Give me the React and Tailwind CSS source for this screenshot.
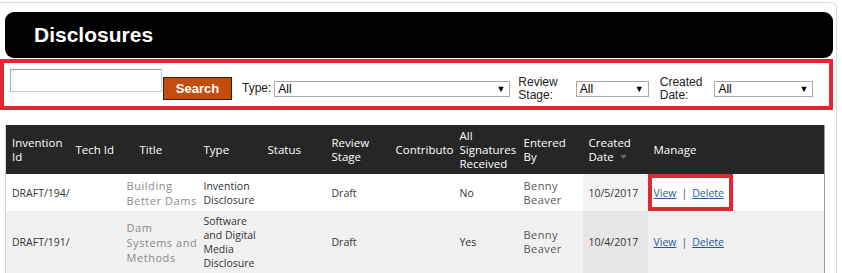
import React from 'react';

const rows = [
  {
    id: 'DRAFT/194/',
    title: ['Building', 'Better Dams'],
    type: ['Invention', 'Disclosure'],
    stage: 'Draft',
    signed: 'No',
    by: ['Benny', 'Beaver'],
    date: '10/5/2017',
    highlight: true,
  },
  {
    id: 'DRAFT/191/',
    title: ['Dam', 'Systems and', 'Methods'],
    type: ['Software', 'and Digital', 'Media', 'Disclosure'],
    stage: 'Draft',
    signed: 'Yes',
    by: ['Benny', 'Beaver'],
    date: '10/4/2017',
    highlight: false,
  },
];

function FakeSelect({ width }) {
  return (
    <div className={`mt-[18px] flex h-[16px] items-center justify-between border border-[#a9a9a9] bg-white pl-[3px] pr-[4px] text-[12px] leading-none text-black ${width}`}>
      <span>All</span>
      <span className="text-[9px]">▼</span>
    </div>
  );
}

function Lines({ items }) {
  return items.map((t, i) => (
    <div key={i} className="whitespace-nowrap">
      {t}
    </div>
  ));
}

export default function App() {
  return (
    <div className="h-[273px] w-[842px] overflow-hidden bg-white">
      <div className="mt-[2px] h-[271px] w-[837px] rounded-tr-[6px] border-t border-r border-[#dcdcdc]">
        {/* title bar */}
        <div className="ml-[5px] mt-[9px] flex h-[46px] w-[828px] items-center rounded-[9px] bg-black pl-[29px]">
          <h1 className="font-['Liberation_Sans',Arial,sans-serif] text-[21px] font-bold text-white">Disclosures</h1>
        </div>

        {/* filters */}
        <div className="mt-[1px] flex h-[51px] w-[833px] items-start border-[4px] border-[#dd2a32] font-['Liberation_Sans',Arial,sans-serif] text-[12px] text-[#222]">
          <input
            type="text"
            className="ml-[6px] mt-[6px] h-[23px] w-[152px] border border-[#c8c8c8] border-t-[#9a9a9a] border-l-[#b0b0b0] bg-white outline-none"
          />
          <button className="ml-[1px] mt-[14px] h-[23px] w-[69px] border border-[#3b1d06] bg-[#c24d0c] text-[13px] font-bold text-white">
            Search
          </button>
          <span className="ml-[10px] mt-[19px] leading-none">Type:</span>
          <span className="ml-[3px]"><FakeSelect width="w-[236px]" /></span>
          <span className="ml-[8px] mt-[13px] leading-[13px]">
            Review<br />Stage:
          </span>
          <span className="ml-[18px]"><FakeSelect width="w-[73px]" /></span>
          <span className="ml-[11px] mt-[13px] leading-[13px]">
            Created<br />Date:
          </span>
          <span className="ml-[12px]"><FakeSelect width="w-[99px]" /></span>
        </div>

        {/* table */}
        <table className="ml-[5px] mt-[15px] w-[820px] table-fixed border-collapse border-l border-r border-l-[#d4d4d4] border-r-[#9d9d9d] font-['Open_Sans','Noto_Sans',sans-serif] text-[#333]">
          <colgroup>
            <col className="w-[64px]" />
            <col className="w-[50px]" />
            <col className="w-[78px]" />
            <col className="w-[64px]" />
            <col className="w-[64px]" />
            <col className="w-[64px]" />
            <col className="w-[64px]" />
            <col className="w-[64px]" />
            <col className="w-[65px]" />
            <col className="w-[65px]" />
            <col />
          </colgroup>
          <thead>
            <tr className="h-[49px] bg-[#262626] text-left align-middle text-[11.5px] leading-[14px] text-white">
              <th className="overflow-hidden pl-[6px] font-normal leading-[14px]">Invention<br />Id</th>
              <th className="overflow-hidden pl-[6px] font-normal whitespace-nowrap">Tech Id</th>
              <th className="overflow-hidden pl-[20px] font-normal">Title</th>
              <th className="overflow-hidden pl-[6px] font-normal">Type</th>
              <th className="overflow-hidden pl-[6px] font-normal">Status</th>
              <th className="overflow-hidden pl-[6px] font-normal leading-[14px]">Review<br />Stage</th>
              <th className="overflow-hidden pl-[6px] font-normal">Contributors</th>
              <th className="overflow-hidden pl-[6px] font-normal leading-[14px] whitespace-nowrap">All<br />Signatures<br />Received</th>
              <th className="overflow-hidden pl-[6px] font-normal leading-[14px]">Entered<br />By</th>
              <th className="overflow-hidden pl-[6px] font-normal leading-[14px]">
                Created<br />
                Date
                <svg className="ml-[6px] inline-block align-middle" width="7" height="4" viewBox="0 0 7 4">
                  <path d="M0 0h7L3.5 4z" fill="#666" />
                </svg>
              </th>
              <th className="overflow-hidden pl-[6px] font-normal">Manage</th>
            </tr>
          </thead>
          <tbody className="text-[10.5px] leading-[14px]">
            {rows.map((r, i) => (
              <tr key={r.id} className={`align-middle ${i % 2 ? 'bg-[#f1f1f1]' : 'bg-white'}`}>
                <td className="py-[3px] pl-[6px]">{r.id}</td>
                <td className="pl-[6px]"></td>
                <td className="py-[3px] pl-[7px] text-[11px] leading-[15px] tracking-[0.05em] text-[#8a8a8a]">
                  <Lines items={r.title} />
                </td>
                <td className="py-[3px] pl-[6px]"><Lines items={r.type} /></td>
                <td className="pl-[6px]"></td>
                <td className="pl-[6px]">{r.stage}</td>
                <td className="pl-[6px]"></td>
                <td className="pl-[6px]">{r.signed}</td>
                <td className="py-[3px] pl-[6px] text-[11px] tracking-[0.04em] text-[#555]">
                  <Lines items={r.by} />
                </td>
                <td className={`pl-[6px] ${i % 2 ? 'bg-[#e7e7e7]' : 'bg-[#f3f3f3]'}`}>{r.date}</td>
                <td className="p-0">
                  {r.highlight ? (
                    <div className="flex h-[37px] w-[85px] items-center border-[4px] border-[#dd2a32] pl-[2px]">
                      <a href="#" className="text-[#1f5ba8] underline">View</a>
                      <span className="mx-[5px] text-[#555]">|</span>
                      <a href="#" className="text-[#1f5ba8] underline">Delete</a>
                    </div>
                  ) : (
                    <div className="flex items-center pl-[6px]">
                      <a href="#" className="text-[#1f5ba8] underline">View</a>
                      <span className="mx-[5px] text-[#555]">|</span>
                      <a href="#" className="text-[#1f5ba8] underline">Delete</a>
                    </div>
                  )}
                </td>
              </tr>
            ))}
          </tbody>
        </table>
      </div>
    </div>
  );
}
